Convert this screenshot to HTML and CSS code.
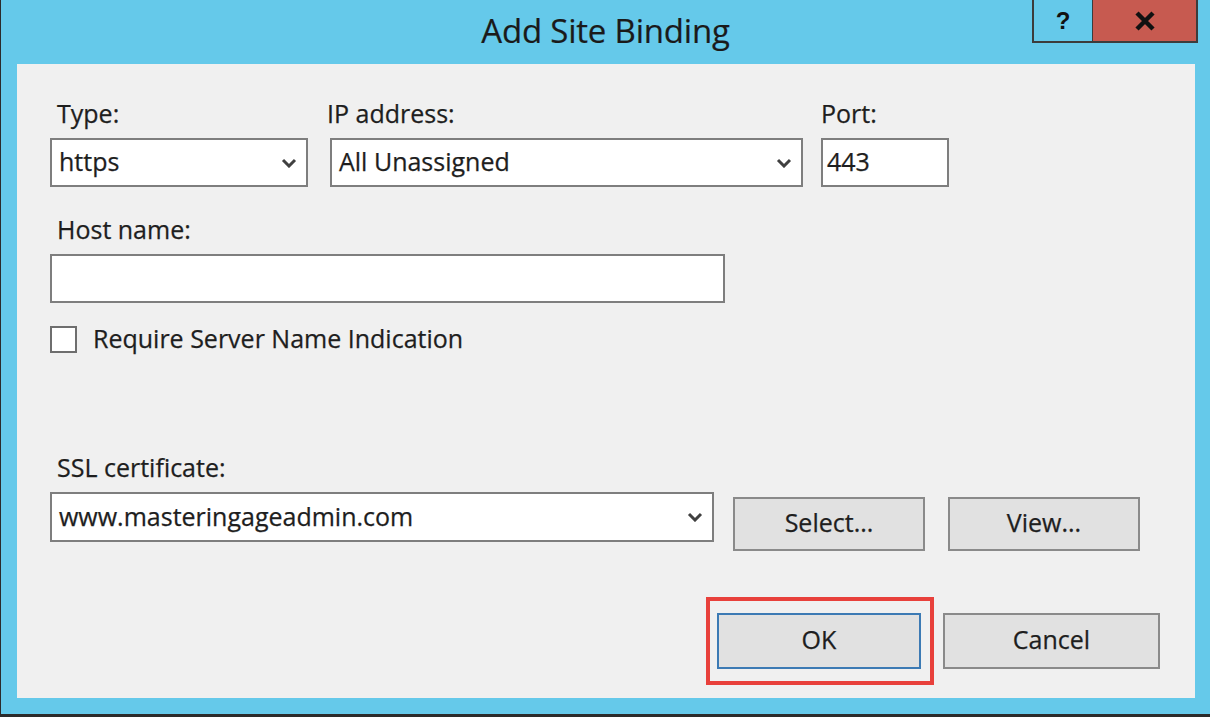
FILE: index.html
```html
<!DOCTYPE html>
<html lang="en">
<head>
    <meta charset="UTF-8">
    <meta name="viewport" content="width=device-width, initial-scale=1.0">
    <title>Add Site Binding</title>
    <link rel="stylesheet" href="styles.css">
</head>
<body>
    <div class="window">
        <div class="titlebar">
            <div></div>
            <div class="title">Add Site Binding</div>
            <div class="caption">
                <div class="cap-btn cap-help">?</div>
                <div class="cap-btn cap-close">
                    <svg width="22" height="20" viewBox="0 0 22 20">
                        <path d="M3 2 L19 18 M19 2 L3 18" stroke="#111" stroke-width="4.5" fill="none"/>
                    </svg>
                </div>
            </div>
        </div>

        <div class="client">
            <div class="row">
                <div class="group g-type">
                    <div class="label indent">Type:</div>
                    <div class="field combo">
                        <span>https</span>
                        <svg class="chev" width="16" height="10" viewBox="0 0 16 10"><path d="M2 2 L8 8 L14 2" stroke="#404040" stroke-width="3" fill="none"/></svg>
                    </div>
                </div>
                <div class="group g-ip">
                    <div class="label">IP address:</div>
                    <div class="field combo">
                        <span>All Unassigned</span>
                        <svg class="chev" width="16" height="10" viewBox="0 0 16 10"><path d="M2 2 L8 8 L14 2" stroke="#404040" stroke-width="3" fill="none"/></svg>
                    </div>
                </div>
                <div class="group g-port">
                    <div class="label">Port:</div>
                    <div class="field port"><span>443</span></div>
                </div>
            </div>

            <div class="group g-host">
                <div class="label indent">Host name:</div>
                <div class="field"></div>
            </div>

            <div class="check-row">
                <div class="checkbox"></div>
                <div class="check-label">Require Server Name Indication</div>
            </div>

            <div class="group g-ssl">
                <div class="label indent">SSL certificate:</div>
                <div class="ssl-row">
                    <div class="field combo ssl-field">
                        <span>www.masteringageadmin.com</span>
                        <svg class="chev" width="16" height="10" viewBox="0 0 16 10"><path d="M2 2 L8 8 L14 2" stroke="#404040" stroke-width="3" fill="none"/></svg>
                    </div>
                    <button class="btn btn-select">Select...</button>
                    <button class="btn btn-view">View...</button>
                </div>
            </div>

            <div class="footer">
                <div class="highlight">
                    <button class="btn btn-ok">OK</button>
                </div>
                <button class="btn btn-cancel">Cancel</button>
            </div>
        </div>
    </div>
</body>
</html>
```

FILE: styles.css
```css
body {
    margin: 0;
    width: 1210px;
    height: 717px;
    overflow: hidden;
    font-family: "Open Sans", "Noto Sans", sans-serif;
    color: #1e1e1e;
}
.window {
    height: 717px;
    box-sizing: border-box;
    background: #65c9ea;
    border-left: 1px solid #2b2b2b;
    border-bottom: 3px solid #2b2b2b;
    display: flex;
    flex-direction: column;
}
.titlebar {
    height: 64px;
    display: grid;
    grid-template-columns: 1fr auto 1fr;
}
.title {
    font-size: 33px;
    line-height: 62px;
    color: #1a1a1a;
    letter-spacing: -0.2px;
    -webkit-text-stroke: 0.2px #1a1a1a;
}
.caption {
    justify-self: end;
    align-self: start;
    display: flex;
    margin-right: 12px;
}
.cap-btn {
    height: 43px;
    box-sizing: border-box;
    border-bottom: 2px solid #3c3c3c;
    display: flex;
    align-items: center;
    justify-content: center;
}
.cap-help {
    width: 61px;
    border-left: 2px solid #3c3c3c;
    border-right: 1px solid #3c3c3c;
    font-weight: bold;
    font-size: 24px;
    color: #111;
    font-family: "Liberation Sans", sans-serif;
}
.cap-close {
    width: 105px;
    background: #c75a50;
    border-right: 2px solid #3c3c3c;
}
.client {
    margin: 0 15px 0 16px;
    height: 634px;
    background: #f0f0f0;
    box-sizing: border-box;
    padding: 36px 0 0 33px;
    font-size: 25px;
    -webkit-text-stroke: 0.25px #1e1e1e;
}
.row {
    display: flex;
}
.label {
    line-height: 26px;
    height: 30px;
    margin-bottom: 8px;
}
.indent {
    padding-left: 7px;
}
.g-type {
    width: 258px;
}
.g-ip {
    width: 473px;
    margin-left: 22px;
}
.g-ip .label {
    margin-left: -3px;
}
.g-port {
    width: 128px;
    margin-left: 18px;
}
.field {
    height: 49px;
    box-sizing: border-box;
    background: #fff;
    border: 2px solid #7e7e7e;
    display: flex;
    align-items: center;
    padding: 0 0 3px 7px;
}
.combo {
    justify-content: space-between;
    padding-right: 9px;
}
.chev {
    margin-top: 3px;
}
.port {
    padding-left: 4px;
}
.g-host {
    margin-top: 29px;
    width: 675px;
}
.check-row {
    display: flex;
    align-items: flex-start;
    margin-top: 23px;
}
.checkbox {
    width: 27px;
    height: 27px;
    box-sizing: border-box;
    background: #fff;
    border: 2px solid #6e6e6e;
}
.check-label {
    margin-left: 16px;
    line-height: 24px;
}
.g-ssl {
    margin-top: 101px;
}
.ssl-row {
    display: flex;
    align-items: flex-start;
}
.ssl-field {
    width: 664px;
    height: 50px;
}
.btn {
    font-family: inherit;
    font-size: 25px;
    color: #1e1e1e;
    -webkit-text-stroke: 0.25px #1e1e1e;
    background: #e1e1e1;
    border: 2px solid #8a8a8a;
    padding: 0 0 5px;
    height: 54px;
}
.btn-select {
    width: 192px;
    margin: 5px 0 0 19px;
}
.btn-view {
    width: 192px;
    margin: 5px 0 0 23px;
}
.footer {
    display: flex;
    justify-content: flex-end;
    align-items: center;
    margin: 46px 35px 0 0;
}
.highlight {
    width: 228px;
    height: 88px;
    box-sizing: border-box;
    border: 4px solid #e8403b;
    padding: 12px 9px 0 7px;
}
.btn-ok {
    width: 204px;
    height: 56px;
    border-color: #3c7ab4;
}
.btn-cancel {
    width: 217px;
    height: 56px;
    margin-left: 9px;
}
```
